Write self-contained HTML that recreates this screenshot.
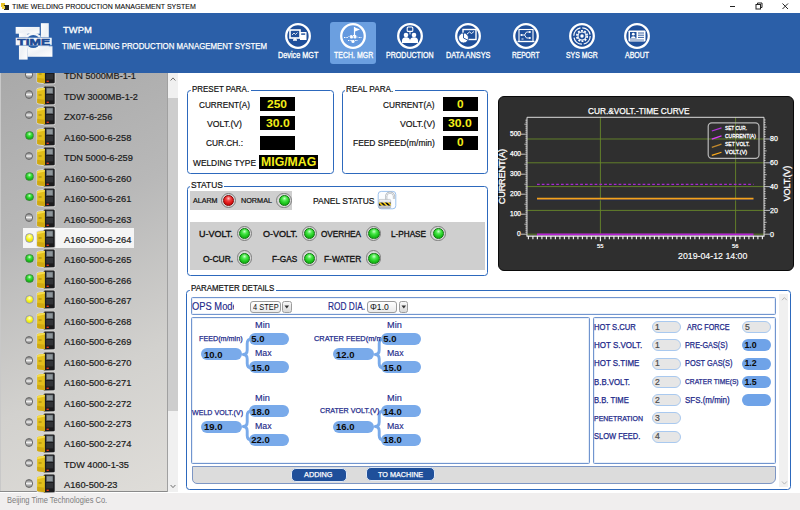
<!DOCTYPE html>
<html><head><meta charset="utf-8"><title>TIME WELDING PRODUCTION MANAGEMENT SYSTEM</title>
<style>
html,body{margin:0;padding:0;}
body{width:800px;height:510px;position:relative;overflow:hidden;background:#fff;font-family:"Liberation Sans",sans-serif;}
.t{position:absolute;white-space:nowrap;line-height:1;transform-origin:0 50%;}
.a{position:absolute;box-sizing:border-box;}
.bx{position:absolute;box-sizing:border-box;border:1.4px solid #2d69bd;border-radius:3.5px;}
.lg{position:absolute;background:#fff;height:10px;}
.blk{position:absolute;background:#000;}
.gr{position:absolute;background:#cfcfcf;}
.led{position:absolute;width:15.4px;height:15.4px;border-radius:50%;box-sizing:border-box;border:0.8px solid #7c7c7c;background:#d6d6d6;}
.led i{position:absolute;left:1.3px;top:1.3px;width:11.2px;height:11.2px;border-radius:50%;display:block;box-sizing:border-box;}
.led.g i{background:radial-gradient(circle at 50% 28%,#c8ffc8 0%,#4be84b 30%,#1fc81f 60%,#0e9a0e 100%);border:0.7px solid #0b7a0b;}
.led.r i{background:radial-gradient(circle at 50% 28%,#ffc0c0 0%,#f04040 30%,#e01818 60%,#a80000 100%);border:0.7px solid #8a0000;}
.pill{position:absolute;background:#79aaea;border-radius:6px;box-sizing:border-box;}
.inp{position:absolute;background:#e6e6e6;border:1px solid #a9c9ef;border-radius:6.5px;box-sizing:border-box;width:29px;height:12px;}
.dot{position:absolute;width:8.2px;height:8.2px;border-radius:50%;box-sizing:border-box;}
.dot.x{background:linear-gradient(#7c7c7c 0%,#c8c8c8 35%,#f6f6f6 52%,#b4b4b4 70%,#8a8a8a 100%);border:1px solid #686868;}
.dot.g{border:0.5px solid #3a8a3a;background:radial-gradient(circle at 50% 30%,#d8ffd8 0%,#48e448 28%,#1cc41c 60%,#0a900a 100%);}
.dot.y{border:0.6px solid #9c9cae;background:radial-gradient(circle at 50% 32%,#ffffd0 0%,#f6f622 45%,#e0e000 80%,#b8b800 100%);}
</style></head><body>
<div class="a" style="left:0.00px;top:0.00px;width:800.00px;height:13.00px;background:#fff;"></div>
<svg class="a" style="left:1px;top:2px" width="9" height="9" viewBox="0 0 9 9"><rect x="0" y="1" width="4" height="4" fill="#e8c020"/><rect x="3" y="3" width="5" height="5" fill="#222"/><rect x="1" y="4" width="3" height="3" fill="#f0d040"/></svg>
<svg class="a" style="left:720px;top:0" width="80" height="13" viewBox="0 0 80 13"><path d="M10 6.5h5" stroke="#222" stroke-width="1" fill="none"/><rect x="36" y="4.5" width="4.5" height="4.5" fill="none" stroke="#222" stroke-width="1"/><path d="M37.5 4.5v-1.5h4.5v4.5h-1.5" fill="none" stroke="#222" stroke-width="1"/><path d="M62.5 3.5l5.5 5.5M68 3.5l-5.5 5.5" stroke="#222" stroke-width="1" fill="none"/></svg>
<div class="a" style="left:0.00px;top:13.00px;width:800.00px;height:60.00px;background:#2b5fa8;"></div>
<svg class="a" style="left:10px;top:18px" width="50" height="48" viewBox="0 0 531 510">
<defs><linearGradient id="lgm" x1="0" y1="0" x2="1" y2="1"><stop offset="0" stop-color="#ffffff"/><stop offset="0.5" stop-color="#eef1f5"/><stop offset="1" stop-color="#ffffff"/></linearGradient></defs>
<g fill="url(#lgm)">
<rect x="60" y="95" width="255" height="72"/>
<rect x="95" y="160" width="92" height="282"/>
<rect x="328" y="55" width="84" height="250"/>
<rect x="185" y="300" width="266" height="112"/>
<circle cx="247" cy="250" r="96"/>
</g>
<circle cx="247" cy="250" r="70" fill="#2b5fa8"/>
<rect x="58" y="207" width="388" height="84" rx="10" fill="#f4f6fa" stroke="#2b5fa8" stroke-width="5"/>
<text x="252" y="283" font-family="Liberation Sans, sans-serif" font-weight="bold" font-size="94" text-anchor="middle" fill="#1d4a94" stroke="#1d4a94" stroke-width="5.5" textLength="348" lengthAdjust="spacingAndGlyphs">TIME</text>
</svg>
<div class="a" style="left:330.00px;top:21.50px;width:46.20px;height:42.70px;background:#6b9fe0;border-radius:3px;"></div>
<svg class="a" style="left:282.80px;top:21.4px" width="30" height="30" viewBox="-15 -15 30 30"><circle cx="0" cy="0" r="11.8" fill="#1f4f9a" stroke="#fff" stroke-width="2.3"/><rect x="-8" y="-6" width="10" height="8" fill="none" stroke="#fff" stroke-width="1.6"/><path d="M-5 4h4M-3 2v2" stroke="#fff" stroke-width="1.4"/><rect x="2" y="-4" width="6.5" height="8" fill="#fff"/><path d="M-6 -1l2-2 1.5 1.5 2-2" stroke="#fff" stroke-width="0.8" fill="none"/><rect x="3.2" y="-2.6" width="4" height="1.4" fill="#1f4f9a"/></svg>
<svg class="a" style="left:338.40px;top:21.4px" width="30" height="30" viewBox="-15 -15 30 30"><circle cx="0" cy="0" r="11.8" fill="#6499df" stroke="#fff" stroke-width="2.3"/><path d="M1.5 -9v9" stroke="#fff" stroke-width="1.2"/><path d="M2 -8.5l5 2-5 2z" fill="#fff"/><path d="M-9 1.5h4l2-2h6l2 2h4" stroke="#fff" stroke-width="1" fill="none" stroke-dasharray="1.4 1"/><path d="M-5 4.5h10" stroke="#fff" stroke-width="1" stroke-dasharray="1.4 1"/><circle cx="-1.5" cy="1" r="1.6" fill="#fff"/><circle cx="2" cy="1" r="1.6" fill="#fff"/><circle cx="0" cy="5.5" r="1.6" fill="#fff"/></svg>
<svg class="a" style="left:395.00px;top:21.4px" width="30" height="30" viewBox="-15 -15 30 30"><circle cx="0" cy="0" r="11.8" fill="#1f4f9a" stroke="#fff" stroke-width="2.3"/><rect x="-2.8" y="-9" width="5.6" height="4.4" rx="1" fill="none" stroke="#fff" stroke-width="1.1"/><circle cx="-4" cy="-1" r="2.3" fill="#fff"/><circle cx="4" cy="-1" r="2.3" fill="#fff"/><path d="M-8 7v-2.2a4 3.6 0 0 1 8 0V7zM0 7v-2.2a4 3.6 0 0 1 8 0V7z" fill="#fff"/><path d="M0 -4.6v3" stroke="#fff" stroke-width="1"/></svg>
<svg class="a" style="left:452.90px;top:21.4px" width="30" height="30" viewBox="-15 -15 30 30"><circle cx="0" cy="0" r="11.8" fill="#1f4f9a" stroke="#fff" stroke-width="2.3"/><rect x="-5" y="-6.5" width="13" height="10" fill="none" stroke="#fff" stroke-width="1.4"/><path d="M-1 -2l2.5-2 2 1.5 2.5-2" stroke="#fff" stroke-width="0.9" fill="none"/><circle cx="-4.5" cy="2" r="5" fill="#fff" stroke="#1f4f9a" stroke-width="0.8"/><path d="M-4.5 2v-5M-4.5 2l4.4 2.2" stroke="#1f4f9a" stroke-width="0.9"/></svg>
<svg class="a" style="left:510.60px;top:21.4px" width="30" height="30" viewBox="-15 -15 30 30"><circle cx="0" cy="0" r="11.8" fill="#1f4f9a" stroke="#fff" stroke-width="2.3"/><rect x="-7" y="-6.5" width="14" height="12" fill="none" stroke="#fff" stroke-width="1.1"/><path d="M-4.5 -1h3l2-3h3M-1.5 -1l2 3h3M-4.5 3h2" stroke="#fff" stroke-width="0.9" fill="none"/><circle cx="-4.5" cy="-1" r="1.1" fill="#fff"/><circle cx="3.8" cy="-4" r="1.1" fill="#fff"/><circle cx="3.8" cy="2" r="1.1" fill="#fff"/><path d="M-8.5 5.5h17" stroke="#fff" stroke-width="1.3"/></svg>
<svg class="a" style="left:567.10px;top:21.4px" width="30" height="30" viewBox="-15 -15 30 30"><circle cx="0" cy="0" r="11.8" fill="#1f4f9a" stroke="#fff" stroke-width="2.3"/><circle cx="0" cy="0" r="8.2" fill="none" stroke="#fff" stroke-width="1.2" stroke-dasharray="11 1.9"/><circle cx="0" cy="0" r="5.2" fill="none" stroke="#fff" stroke-width="1.7" stroke-dasharray="1.9 1.37"/><circle cx="0" cy="0" r="4" fill="none" stroke="#fff" stroke-width="1.1"/><circle cx="0" cy="0" r="1.7" fill="#fff"/></svg>
<svg class="a" style="left:622.30px;top:21.4px" width="30" height="30" viewBox="-15 -15 30 30"><circle cx="0" cy="0" r="11.8" fill="#1f4f9a" stroke="#fff" stroke-width="2.3"/><rect x="-8.5" y="-5.5" width="17" height="11" rx="0.8" fill="#fff"/><rect x="-7" y="-4" width="6.5" height="6.5" fill="#1f4f9a"/><circle cx="-3.7" cy="-1.8" r="1.4" fill="#fff"/><path d="M-6 2.2a2.3 2 0 0 1 4.6 0z" fill="#fff"/><path d="M1 -3h6M1 -0.8h6M1 1.4h6" stroke="#1f4f9a" stroke-width="0.9"/><path d="M-7 4h14" stroke="#1f4f9a" stroke-width="0.7"/></svg>
<div class="a" style="left:0.00px;top:73.00px;width:168.00px;height:419.00px;background:linear-gradient(155deg,#a9a9a9 0%,#b8b8b8 35%,#d2d1ce 70%,#dfddd9 100%);"></div>
<div class="a" style="left:0.00px;top:73.00px;width:1.00px;height:418.00px;background:#c8c8c8;"></div>
<div class="a" style="left:0.00px;top:491.20px;width:168.00px;height:1.00px;background:#8a8a8a;"></div>
<div class="a" style="left:168.00px;top:73.00px;width:10.00px;height:419.00px;background:#f0f0f0;"></div>
<div class="a" style="left:167.20px;top:73.00px;width:0.80px;height:419.00px;background:#a0a0a0;"></div>
<div class="a" style="left:168.00px;top:98.20px;width:10.00px;height:312.80px;background:#cdcdcd;"></div>
<svg class="a" style="left:167.8px;top:73px" width="10" height="418" viewBox="0 0 10 418"><path d="M2.6 7.5l2.4-2.6 2.4 2.6" stroke="#606060" stroke-width="0.9" fill="none"/><path d="M2.6 412l2.4 2.6 2.4-2.6" stroke="#606060" stroke-width="0.9" fill="none"/></svg>
<div class="a" style="left:0;top:73px;width:167px;height:20px;overflow:hidden">
<svg class="a" style="left:35.6px;top:-7.60px" width="20" height="20" viewBox="0 0 20 20">
<path d="M1 3.6Q1 2.6 2.2 2.4L10 1.2L10.4 0.9Q10.6 0.2 11.6 0.2H17.4Q18.9 0.2 18.9 1.8V17.4Q18.9 18.4 17.8 18.5L9.6 18.9L2 17.6Q1.1 17.4 1.1 16.4z" fill="#d6d6d6" stroke="#d6d6d6" stroke-width="1.3" stroke-linejoin="round"/>
<path d="M7.8 1.5Q7.9 0.4 9.2 0.4H17.3Q18.7 0.4 18.7 1.8V17.2Q18.7 18.2 17.6 18.3L7.8 18.5z" fill="#1b1b1d"/>
<path d="M1.1 4Q1.1 2.9 2.3 2.7L8.9 1.7V18.3L2.1 17.3Q1.2 17.1 1.2 16.2z" fill="#e2be1a"/>
<path d="M1.1 4Q1.1 2.9 2.3 2.7L8.9 1.7V3.5L1.1 5.2z" fill="#f5dc4c"/>
<path d="M1.2 12.8L8.9 13.7V18.3L2.1 17.3Q1.2 17.1 1.2 16.2z" fill="#cfa812"/>
<path d="M2.6 8.6h3v0.8h-3z" fill="#8a700a"/>
<path d="M10.2 1.7h7v6.2h-7z" fill="#5f666b"/>
<path d="M10.9 2.4h5.6v4.6h-5.6z" fill="#8e969b"/>
<path d="M10.2 9h7v5.4h-7z" fill="#303236"/>
<rect x="10.6" y="15.6" width="2.2" height="1.4" fill="#e23a1c"/>
</svg>
<div class="dot x" style="left:24.90px;top:-3.00px;width:8.6px;height:8.6px"></div>
<span class="t" style="left:64.4px;top:-1.65px;font-size:9.9px;color:#1a1a1a;transform:scaleX(0.93);-webkit-text-stroke:0.2px #1a1a1a">TDN 5000MB-1-1</span>
</div>
<svg class="a" style="left:35.6px;top:85.85px" width="20" height="20" viewBox="0 0 20 20">
<path d="M1 3.6Q1 2.6 2.2 2.4L10 1.2L10.4 0.9Q10.6 0.2 11.6 0.2H17.4Q18.9 0.2 18.9 1.8V17.4Q18.9 18.4 17.8 18.5L9.6 18.9L2 17.6Q1.1 17.4 1.1 16.4z" fill="#d6d6d6" stroke="#d6d6d6" stroke-width="1.3" stroke-linejoin="round"/>
<path d="M7.8 1.5Q7.9 0.4 9.2 0.4H17.3Q18.7 0.4 18.7 1.8V17.2Q18.7 18.2 17.6 18.3L7.8 18.5z" fill="#1b1b1d"/>
<path d="M1.1 4Q1.1 2.9 2.3 2.7L8.9 1.7V18.3L2.1 17.3Q1.2 17.1 1.2 16.2z" fill="#e2be1a"/>
<path d="M1.1 4Q1.1 2.9 2.3 2.7L8.9 1.7V3.5L1.1 5.2z" fill="#f5dc4c"/>
<path d="M1.2 12.8L8.9 13.7V18.3L2.1 17.3Q1.2 17.1 1.2 16.2z" fill="#cfa812"/>
<path d="M2.6 8.6h3v0.8h-3z" fill="#8a700a"/>
<path d="M10.2 1.7h7v6.2h-7z" fill="#5f666b"/>
<path d="M10.9 2.4h5.6v4.6h-5.6z" fill="#8e969b"/>
<path d="M10.2 9h7v5.4h-7z" fill="#303236"/>
<rect x="10.6" y="15.6" width="2.2" height="1.4" fill="#e23a1c"/>
</svg>
<div class="dot x" style="left:24.90px;top:90.45px;width:8.6px;height:8.6px"></div>
<svg class="a" style="left:35.6px;top:106.30px" width="20" height="20" viewBox="0 0 20 20">
<path d="M1 3.6Q1 2.6 2.2 2.4L10 1.2L10.4 0.9Q10.6 0.2 11.6 0.2H17.4Q18.9 0.2 18.9 1.8V17.4Q18.9 18.4 17.8 18.5L9.6 18.9L2 17.6Q1.1 17.4 1.1 16.4z" fill="#d6d6d6" stroke="#d6d6d6" stroke-width="1.3" stroke-linejoin="round"/>
<path d="M7.8 1.5Q7.9 0.4 9.2 0.4H17.3Q18.7 0.4 18.7 1.8V17.2Q18.7 18.2 17.6 18.3L7.8 18.5z" fill="#1b1b1d"/>
<path d="M1.1 4Q1.1 2.9 2.3 2.7L8.9 1.7V18.3L2.1 17.3Q1.2 17.1 1.2 16.2z" fill="#e2be1a"/>
<path d="M1.1 4Q1.1 2.9 2.3 2.7L8.9 1.7V3.5L1.1 5.2z" fill="#f5dc4c"/>
<path d="M1.2 12.8L8.9 13.7V18.3L2.1 17.3Q1.2 17.1 1.2 16.2z" fill="#cfa812"/>
<path d="M2.6 8.6h3v0.8h-3z" fill="#8a700a"/>
<path d="M10.2 1.7h7v6.2h-7z" fill="#5f666b"/>
<path d="M10.9 2.4h5.6v4.6h-5.6z" fill="#8e969b"/>
<path d="M10.2 9h7v5.4h-7z" fill="#303236"/>
<rect x="10.6" y="15.6" width="2.2" height="1.4" fill="#e23a1c"/>
</svg>
<div class="dot x" style="left:24.90px;top:110.90px;width:8.6px;height:8.6px"></div>
<svg class="a" style="left:35.6px;top:126.75px" width="20" height="20" viewBox="0 0 20 20">
<path d="M1 3.6Q1 2.6 2.2 2.4L10 1.2L10.4 0.9Q10.6 0.2 11.6 0.2H17.4Q18.9 0.2 18.9 1.8V17.4Q18.9 18.4 17.8 18.5L9.6 18.9L2 17.6Q1.1 17.4 1.1 16.4z" fill="#d6d6d6" stroke="#d6d6d6" stroke-width="1.3" stroke-linejoin="round"/>
<path d="M7.8 1.5Q7.9 0.4 9.2 0.4H17.3Q18.7 0.4 18.7 1.8V17.2Q18.7 18.2 17.6 18.3L7.8 18.5z" fill="#1b1b1d"/>
<path d="M1.1 4Q1.1 2.9 2.3 2.7L8.9 1.7V18.3L2.1 17.3Q1.2 17.1 1.2 16.2z" fill="#e2be1a"/>
<path d="M1.1 4Q1.1 2.9 2.3 2.7L8.9 1.7V3.5L1.1 5.2z" fill="#f5dc4c"/>
<path d="M1.2 12.8L8.9 13.7V18.3L2.1 17.3Q1.2 17.1 1.2 16.2z" fill="#cfa812"/>
<path d="M2.6 8.6h3v0.8h-3z" fill="#8a700a"/>
<path d="M10.2 1.7h7v6.2h-7z" fill="#5f666b"/>
<path d="M10.9 2.4h5.6v4.6h-5.6z" fill="#8e969b"/>
<path d="M10.2 9h7v5.4h-7z" fill="#303236"/>
<rect x="10.6" y="15.6" width="2.2" height="1.4" fill="#e23a1c"/>
</svg>
<div class="dot g" style="left:24.80px;top:131.25px;width:8.8px;height:8.8px"></div>
<svg class="a" style="left:35.6px;top:147.20px" width="20" height="20" viewBox="0 0 20 20">
<path d="M1 3.6Q1 2.6 2.2 2.4L10 1.2L10.4 0.9Q10.6 0.2 11.6 0.2H17.4Q18.9 0.2 18.9 1.8V17.4Q18.9 18.4 17.8 18.5L9.6 18.9L2 17.6Q1.1 17.4 1.1 16.4z" fill="#d6d6d6" stroke="#d6d6d6" stroke-width="1.3" stroke-linejoin="round"/>
<path d="M7.8 1.5Q7.9 0.4 9.2 0.4H17.3Q18.7 0.4 18.7 1.8V17.2Q18.7 18.2 17.6 18.3L7.8 18.5z" fill="#1b1b1d"/>
<path d="M1.1 4Q1.1 2.9 2.3 2.7L8.9 1.7V18.3L2.1 17.3Q1.2 17.1 1.2 16.2z" fill="#e2be1a"/>
<path d="M1.1 4Q1.1 2.9 2.3 2.7L8.9 1.7V3.5L1.1 5.2z" fill="#f5dc4c"/>
<path d="M1.2 12.8L8.9 13.7V18.3L2.1 17.3Q1.2 17.1 1.2 16.2z" fill="#cfa812"/>
<path d="M2.6 8.6h3v0.8h-3z" fill="#8a700a"/>
<path d="M10.2 1.7h7v6.2h-7z" fill="#5f666b"/>
<path d="M10.9 2.4h5.6v4.6h-5.6z" fill="#8e969b"/>
<path d="M10.2 9h7v5.4h-7z" fill="#303236"/>
<rect x="10.6" y="15.6" width="2.2" height="1.4" fill="#e23a1c"/>
</svg>
<div class="dot x" style="left:24.90px;top:151.80px;width:8.6px;height:8.6px"></div>
<svg class="a" style="left:35.6px;top:167.65px" width="20" height="20" viewBox="0 0 20 20">
<path d="M1 3.6Q1 2.6 2.2 2.4L10 1.2L10.4 0.9Q10.6 0.2 11.6 0.2H17.4Q18.9 0.2 18.9 1.8V17.4Q18.9 18.4 17.8 18.5L9.6 18.9L2 17.6Q1.1 17.4 1.1 16.4z" fill="#d6d6d6" stroke="#d6d6d6" stroke-width="1.3" stroke-linejoin="round"/>
<path d="M7.8 1.5Q7.9 0.4 9.2 0.4H17.3Q18.7 0.4 18.7 1.8V17.2Q18.7 18.2 17.6 18.3L7.8 18.5z" fill="#1b1b1d"/>
<path d="M1.1 4Q1.1 2.9 2.3 2.7L8.9 1.7V18.3L2.1 17.3Q1.2 17.1 1.2 16.2z" fill="#e2be1a"/>
<path d="M1.1 4Q1.1 2.9 2.3 2.7L8.9 1.7V3.5L1.1 5.2z" fill="#f5dc4c"/>
<path d="M1.2 12.8L8.9 13.7V18.3L2.1 17.3Q1.2 17.1 1.2 16.2z" fill="#cfa812"/>
<path d="M2.6 8.6h3v0.8h-3z" fill="#8a700a"/>
<path d="M10.2 1.7h7v6.2h-7z" fill="#5f666b"/>
<path d="M10.9 2.4h5.6v4.6h-5.6z" fill="#8e969b"/>
<path d="M10.2 9h7v5.4h-7z" fill="#303236"/>
<rect x="10.6" y="15.6" width="2.2" height="1.4" fill="#e23a1c"/>
</svg>
<div class="dot g" style="left:24.80px;top:172.15px;width:8.8px;height:8.8px"></div>
<svg class="a" style="left:35.6px;top:188.10px" width="20" height="20" viewBox="0 0 20 20">
<path d="M1 3.6Q1 2.6 2.2 2.4L10 1.2L10.4 0.9Q10.6 0.2 11.6 0.2H17.4Q18.9 0.2 18.9 1.8V17.4Q18.9 18.4 17.8 18.5L9.6 18.9L2 17.6Q1.1 17.4 1.1 16.4z" fill="#d6d6d6" stroke="#d6d6d6" stroke-width="1.3" stroke-linejoin="round"/>
<path d="M7.8 1.5Q7.9 0.4 9.2 0.4H17.3Q18.7 0.4 18.7 1.8V17.2Q18.7 18.2 17.6 18.3L7.8 18.5z" fill="#1b1b1d"/>
<path d="M1.1 4Q1.1 2.9 2.3 2.7L8.9 1.7V18.3L2.1 17.3Q1.2 17.1 1.2 16.2z" fill="#e2be1a"/>
<path d="M1.1 4Q1.1 2.9 2.3 2.7L8.9 1.7V3.5L1.1 5.2z" fill="#f5dc4c"/>
<path d="M1.2 12.8L8.9 13.7V18.3L2.1 17.3Q1.2 17.1 1.2 16.2z" fill="#cfa812"/>
<path d="M2.6 8.6h3v0.8h-3z" fill="#8a700a"/>
<path d="M10.2 1.7h7v6.2h-7z" fill="#5f666b"/>
<path d="M10.9 2.4h5.6v4.6h-5.6z" fill="#8e969b"/>
<path d="M10.2 9h7v5.4h-7z" fill="#303236"/>
<rect x="10.6" y="15.6" width="2.2" height="1.4" fill="#e23a1c"/>
</svg>
<div class="dot g" style="left:24.80px;top:192.60px;width:8.8px;height:8.8px"></div>
<svg class="a" style="left:35.6px;top:208.55px" width="20" height="20" viewBox="0 0 20 20">
<path d="M1 3.6Q1 2.6 2.2 2.4L10 1.2L10.4 0.9Q10.6 0.2 11.6 0.2H17.4Q18.9 0.2 18.9 1.8V17.4Q18.9 18.4 17.8 18.5L9.6 18.9L2 17.6Q1.1 17.4 1.1 16.4z" fill="#d6d6d6" stroke="#d6d6d6" stroke-width="1.3" stroke-linejoin="round"/>
<path d="M7.8 1.5Q7.9 0.4 9.2 0.4H17.3Q18.7 0.4 18.7 1.8V17.2Q18.7 18.2 17.6 18.3L7.8 18.5z" fill="#1b1b1d"/>
<path d="M1.1 4Q1.1 2.9 2.3 2.7L8.9 1.7V18.3L2.1 17.3Q1.2 17.1 1.2 16.2z" fill="#e2be1a"/>
<path d="M1.1 4Q1.1 2.9 2.3 2.7L8.9 1.7V3.5L1.1 5.2z" fill="#f5dc4c"/>
<path d="M1.2 12.8L8.9 13.7V18.3L2.1 17.3Q1.2 17.1 1.2 16.2z" fill="#cfa812"/>
<path d="M2.6 8.6h3v0.8h-3z" fill="#8a700a"/>
<path d="M10.2 1.7h7v6.2h-7z" fill="#5f666b"/>
<path d="M10.9 2.4h5.6v4.6h-5.6z" fill="#8e969b"/>
<path d="M10.2 9h7v5.4h-7z" fill="#303236"/>
<rect x="10.6" y="15.6" width="2.2" height="1.4" fill="#e23a1c"/>
</svg>
<div class="dot x" style="left:24.90px;top:213.15px;width:8.6px;height:8.6px"></div>
<div class="a" style="left:22.80px;top:228.00px;width:111.20px;height:20.40px;background:#f5f5f5;"></div>
<svg class="a" style="left:35.6px;top:229.00px" width="20" height="20" viewBox="0 0 20 20">
<path d="M1 3.6Q1 2.6 2.2 2.4L10 1.2L10.4 0.9Q10.6 0.2 11.6 0.2H17.4Q18.9 0.2 18.9 1.8V17.4Q18.9 18.4 17.8 18.5L9.6 18.9L2 17.6Q1.1 17.4 1.1 16.4z" fill="#d6d6d6" stroke="#d6d6d6" stroke-width="1.3" stroke-linejoin="round"/>
<path d="M7.8 1.5Q7.9 0.4 9.2 0.4H17.3Q18.7 0.4 18.7 1.8V17.2Q18.7 18.2 17.6 18.3L7.8 18.5z" fill="#1b1b1d"/>
<path d="M1.1 4Q1.1 2.9 2.3 2.7L8.9 1.7V18.3L2.1 17.3Q1.2 17.1 1.2 16.2z" fill="#e2be1a"/>
<path d="M1.1 4Q1.1 2.9 2.3 2.7L8.9 1.7V3.5L1.1 5.2z" fill="#f5dc4c"/>
<path d="M1.2 12.8L8.9 13.7V18.3L2.1 17.3Q1.2 17.1 1.2 16.2z" fill="#cfa812"/>
<path d="M2.6 8.6h3v0.8h-3z" fill="#8a700a"/>
<path d="M10.2 1.7h7v6.2h-7z" fill="#5f666b"/>
<path d="M10.9 2.4h5.6v4.6h-5.6z" fill="#8e969b"/>
<path d="M10.2 9h7v5.4h-7z" fill="#303236"/>
<rect x="10.6" y="15.6" width="2.2" height="1.4" fill="#e23a1c"/>
</svg>
<div class="dot y" style="left:24.50px;top:233.20px;width:9.4px;height:9.4px"></div>
<svg class="a" style="left:35.6px;top:249.45px" width="20" height="20" viewBox="0 0 20 20">
<path d="M1 3.6Q1 2.6 2.2 2.4L10 1.2L10.4 0.9Q10.6 0.2 11.6 0.2H17.4Q18.9 0.2 18.9 1.8V17.4Q18.9 18.4 17.8 18.5L9.6 18.9L2 17.6Q1.1 17.4 1.1 16.4z" fill="#d6d6d6" stroke="#d6d6d6" stroke-width="1.3" stroke-linejoin="round"/>
<path d="M7.8 1.5Q7.9 0.4 9.2 0.4H17.3Q18.7 0.4 18.7 1.8V17.2Q18.7 18.2 17.6 18.3L7.8 18.5z" fill="#1b1b1d"/>
<path d="M1.1 4Q1.1 2.9 2.3 2.7L8.9 1.7V18.3L2.1 17.3Q1.2 17.1 1.2 16.2z" fill="#e2be1a"/>
<path d="M1.1 4Q1.1 2.9 2.3 2.7L8.9 1.7V3.5L1.1 5.2z" fill="#f5dc4c"/>
<path d="M1.2 12.8L8.9 13.7V18.3L2.1 17.3Q1.2 17.1 1.2 16.2z" fill="#cfa812"/>
<path d="M2.6 8.6h3v0.8h-3z" fill="#8a700a"/>
<path d="M10.2 1.7h7v6.2h-7z" fill="#5f666b"/>
<path d="M10.9 2.4h5.6v4.6h-5.6z" fill="#8e969b"/>
<path d="M10.2 9h7v5.4h-7z" fill="#303236"/>
<rect x="10.6" y="15.6" width="2.2" height="1.4" fill="#e23a1c"/>
</svg>
<div class="dot g" style="left:24.80px;top:253.95px;width:8.8px;height:8.8px"></div>
<svg class="a" style="left:35.6px;top:269.90px" width="20" height="20" viewBox="0 0 20 20">
<path d="M1 3.6Q1 2.6 2.2 2.4L10 1.2L10.4 0.9Q10.6 0.2 11.6 0.2H17.4Q18.9 0.2 18.9 1.8V17.4Q18.9 18.4 17.8 18.5L9.6 18.9L2 17.6Q1.1 17.4 1.1 16.4z" fill="#d6d6d6" stroke="#d6d6d6" stroke-width="1.3" stroke-linejoin="round"/>
<path d="M7.8 1.5Q7.9 0.4 9.2 0.4H17.3Q18.7 0.4 18.7 1.8V17.2Q18.7 18.2 17.6 18.3L7.8 18.5z" fill="#1b1b1d"/>
<path d="M1.1 4Q1.1 2.9 2.3 2.7L8.9 1.7V18.3L2.1 17.3Q1.2 17.1 1.2 16.2z" fill="#e2be1a"/>
<path d="M1.1 4Q1.1 2.9 2.3 2.7L8.9 1.7V3.5L1.1 5.2z" fill="#f5dc4c"/>
<path d="M1.2 12.8L8.9 13.7V18.3L2.1 17.3Q1.2 17.1 1.2 16.2z" fill="#cfa812"/>
<path d="M2.6 8.6h3v0.8h-3z" fill="#8a700a"/>
<path d="M10.2 1.7h7v6.2h-7z" fill="#5f666b"/>
<path d="M10.9 2.4h5.6v4.6h-5.6z" fill="#8e969b"/>
<path d="M10.2 9h7v5.4h-7z" fill="#303236"/>
<rect x="10.6" y="15.6" width="2.2" height="1.4" fill="#e23a1c"/>
</svg>
<div class="dot g" style="left:24.80px;top:274.40px;width:8.8px;height:8.8px"></div>
<svg class="a" style="left:35.6px;top:290.35px" width="20" height="20" viewBox="0 0 20 20">
<path d="M1 3.6Q1 2.6 2.2 2.4L10 1.2L10.4 0.9Q10.6 0.2 11.6 0.2H17.4Q18.9 0.2 18.9 1.8V17.4Q18.9 18.4 17.8 18.5L9.6 18.9L2 17.6Q1.1 17.4 1.1 16.4z" fill="#d6d6d6" stroke="#d6d6d6" stroke-width="1.3" stroke-linejoin="round"/>
<path d="M7.8 1.5Q7.9 0.4 9.2 0.4H17.3Q18.7 0.4 18.7 1.8V17.2Q18.7 18.2 17.6 18.3L7.8 18.5z" fill="#1b1b1d"/>
<path d="M1.1 4Q1.1 2.9 2.3 2.7L8.9 1.7V18.3L2.1 17.3Q1.2 17.1 1.2 16.2z" fill="#e2be1a"/>
<path d="M1.1 4Q1.1 2.9 2.3 2.7L8.9 1.7V3.5L1.1 5.2z" fill="#f5dc4c"/>
<path d="M1.2 12.8L8.9 13.7V18.3L2.1 17.3Q1.2 17.1 1.2 16.2z" fill="#cfa812"/>
<path d="M2.6 8.6h3v0.8h-3z" fill="#8a700a"/>
<path d="M10.2 1.7h7v6.2h-7z" fill="#5f666b"/>
<path d="M10.9 2.4h5.6v4.6h-5.6z" fill="#8e969b"/>
<path d="M10.2 9h7v5.4h-7z" fill="#303236"/>
<rect x="10.6" y="15.6" width="2.2" height="1.4" fill="#e23a1c"/>
</svg>
<div class="dot y" style="left:24.50px;top:294.55px;width:9.4px;height:9.4px"></div>
<svg class="a" style="left:35.6px;top:310.80px" width="20" height="20" viewBox="0 0 20 20">
<path d="M1 3.6Q1 2.6 2.2 2.4L10 1.2L10.4 0.9Q10.6 0.2 11.6 0.2H17.4Q18.9 0.2 18.9 1.8V17.4Q18.9 18.4 17.8 18.5L9.6 18.9L2 17.6Q1.1 17.4 1.1 16.4z" fill="#d6d6d6" stroke="#d6d6d6" stroke-width="1.3" stroke-linejoin="round"/>
<path d="M7.8 1.5Q7.9 0.4 9.2 0.4H17.3Q18.7 0.4 18.7 1.8V17.2Q18.7 18.2 17.6 18.3L7.8 18.5z" fill="#1b1b1d"/>
<path d="M1.1 4Q1.1 2.9 2.3 2.7L8.9 1.7V18.3L2.1 17.3Q1.2 17.1 1.2 16.2z" fill="#e2be1a"/>
<path d="M1.1 4Q1.1 2.9 2.3 2.7L8.9 1.7V3.5L1.1 5.2z" fill="#f5dc4c"/>
<path d="M1.2 12.8L8.9 13.7V18.3L2.1 17.3Q1.2 17.1 1.2 16.2z" fill="#cfa812"/>
<path d="M2.6 8.6h3v0.8h-3z" fill="#8a700a"/>
<path d="M10.2 1.7h7v6.2h-7z" fill="#5f666b"/>
<path d="M10.9 2.4h5.6v4.6h-5.6z" fill="#8e969b"/>
<path d="M10.2 9h7v5.4h-7z" fill="#303236"/>
<rect x="10.6" y="15.6" width="2.2" height="1.4" fill="#e23a1c"/>
</svg>
<div class="dot y" style="left:24.50px;top:315.00px;width:9.4px;height:9.4px"></div>
<svg class="a" style="left:35.6px;top:331.25px" width="20" height="20" viewBox="0 0 20 20">
<path d="M1 3.6Q1 2.6 2.2 2.4L10 1.2L10.4 0.9Q10.6 0.2 11.6 0.2H17.4Q18.9 0.2 18.9 1.8V17.4Q18.9 18.4 17.8 18.5L9.6 18.9L2 17.6Q1.1 17.4 1.1 16.4z" fill="#d6d6d6" stroke="#d6d6d6" stroke-width="1.3" stroke-linejoin="round"/>
<path d="M7.8 1.5Q7.9 0.4 9.2 0.4H17.3Q18.7 0.4 18.7 1.8V17.2Q18.7 18.2 17.6 18.3L7.8 18.5z" fill="#1b1b1d"/>
<path d="M1.1 4Q1.1 2.9 2.3 2.7L8.9 1.7V18.3L2.1 17.3Q1.2 17.1 1.2 16.2z" fill="#e2be1a"/>
<path d="M1.1 4Q1.1 2.9 2.3 2.7L8.9 1.7V3.5L1.1 5.2z" fill="#f5dc4c"/>
<path d="M1.2 12.8L8.9 13.7V18.3L2.1 17.3Q1.2 17.1 1.2 16.2z" fill="#cfa812"/>
<path d="M2.6 8.6h3v0.8h-3z" fill="#8a700a"/>
<path d="M10.2 1.7h7v6.2h-7z" fill="#5f666b"/>
<path d="M10.9 2.4h5.6v4.6h-5.6z" fill="#8e969b"/>
<path d="M10.2 9h7v5.4h-7z" fill="#303236"/>
<rect x="10.6" y="15.6" width="2.2" height="1.4" fill="#e23a1c"/>
</svg>
<div class="dot x" style="left:24.90px;top:335.85px;width:8.6px;height:8.6px"></div>
<svg class="a" style="left:35.6px;top:351.70px" width="20" height="20" viewBox="0 0 20 20">
<path d="M1 3.6Q1 2.6 2.2 2.4L10 1.2L10.4 0.9Q10.6 0.2 11.6 0.2H17.4Q18.9 0.2 18.9 1.8V17.4Q18.9 18.4 17.8 18.5L9.6 18.9L2 17.6Q1.1 17.4 1.1 16.4z" fill="#d6d6d6" stroke="#d6d6d6" stroke-width="1.3" stroke-linejoin="round"/>
<path d="M7.8 1.5Q7.9 0.4 9.2 0.4H17.3Q18.7 0.4 18.7 1.8V17.2Q18.7 18.2 17.6 18.3L7.8 18.5z" fill="#1b1b1d"/>
<path d="M1.1 4Q1.1 2.9 2.3 2.7L8.9 1.7V18.3L2.1 17.3Q1.2 17.1 1.2 16.2z" fill="#e2be1a"/>
<path d="M1.1 4Q1.1 2.9 2.3 2.7L8.9 1.7V3.5L1.1 5.2z" fill="#f5dc4c"/>
<path d="M1.2 12.8L8.9 13.7V18.3L2.1 17.3Q1.2 17.1 1.2 16.2z" fill="#cfa812"/>
<path d="M2.6 8.6h3v0.8h-3z" fill="#8a700a"/>
<path d="M10.2 1.7h7v6.2h-7z" fill="#5f666b"/>
<path d="M10.9 2.4h5.6v4.6h-5.6z" fill="#8e969b"/>
<path d="M10.2 9h7v5.4h-7z" fill="#303236"/>
<rect x="10.6" y="15.6" width="2.2" height="1.4" fill="#e23a1c"/>
</svg>
<div class="dot x" style="left:24.90px;top:356.30px;width:8.6px;height:8.6px"></div>
<svg class="a" style="left:35.6px;top:372.15px" width="20" height="20" viewBox="0 0 20 20">
<path d="M1 3.6Q1 2.6 2.2 2.4L10 1.2L10.4 0.9Q10.6 0.2 11.6 0.2H17.4Q18.9 0.2 18.9 1.8V17.4Q18.9 18.4 17.8 18.5L9.6 18.9L2 17.6Q1.1 17.4 1.1 16.4z" fill="#d6d6d6" stroke="#d6d6d6" stroke-width="1.3" stroke-linejoin="round"/>
<path d="M7.8 1.5Q7.9 0.4 9.2 0.4H17.3Q18.7 0.4 18.7 1.8V17.2Q18.7 18.2 17.6 18.3L7.8 18.5z" fill="#1b1b1d"/>
<path d="M1.1 4Q1.1 2.9 2.3 2.7L8.9 1.7V18.3L2.1 17.3Q1.2 17.1 1.2 16.2z" fill="#e2be1a"/>
<path d="M1.1 4Q1.1 2.9 2.3 2.7L8.9 1.7V3.5L1.1 5.2z" fill="#f5dc4c"/>
<path d="M1.2 12.8L8.9 13.7V18.3L2.1 17.3Q1.2 17.1 1.2 16.2z" fill="#cfa812"/>
<path d="M2.6 8.6h3v0.8h-3z" fill="#8a700a"/>
<path d="M10.2 1.7h7v6.2h-7z" fill="#5f666b"/>
<path d="M10.9 2.4h5.6v4.6h-5.6z" fill="#8e969b"/>
<path d="M10.2 9h7v5.4h-7z" fill="#303236"/>
<rect x="10.6" y="15.6" width="2.2" height="1.4" fill="#e23a1c"/>
</svg>
<div class="dot x" style="left:24.90px;top:376.75px;width:8.6px;height:8.6px"></div>
<svg class="a" style="left:35.6px;top:392.60px" width="20" height="20" viewBox="0 0 20 20">
<path d="M1 3.6Q1 2.6 2.2 2.4L10 1.2L10.4 0.9Q10.6 0.2 11.6 0.2H17.4Q18.9 0.2 18.9 1.8V17.4Q18.9 18.4 17.8 18.5L9.6 18.9L2 17.6Q1.1 17.4 1.1 16.4z" fill="#d6d6d6" stroke="#d6d6d6" stroke-width="1.3" stroke-linejoin="round"/>
<path d="M7.8 1.5Q7.9 0.4 9.2 0.4H17.3Q18.7 0.4 18.7 1.8V17.2Q18.7 18.2 17.6 18.3L7.8 18.5z" fill="#1b1b1d"/>
<path d="M1.1 4Q1.1 2.9 2.3 2.7L8.9 1.7V18.3L2.1 17.3Q1.2 17.1 1.2 16.2z" fill="#e2be1a"/>
<path d="M1.1 4Q1.1 2.9 2.3 2.7L8.9 1.7V3.5L1.1 5.2z" fill="#f5dc4c"/>
<path d="M1.2 12.8L8.9 13.7V18.3L2.1 17.3Q1.2 17.1 1.2 16.2z" fill="#cfa812"/>
<path d="M2.6 8.6h3v0.8h-3z" fill="#8a700a"/>
<path d="M10.2 1.7h7v6.2h-7z" fill="#5f666b"/>
<path d="M10.9 2.4h5.6v4.6h-5.6z" fill="#8e969b"/>
<path d="M10.2 9h7v5.4h-7z" fill="#303236"/>
<rect x="10.6" y="15.6" width="2.2" height="1.4" fill="#e23a1c"/>
</svg>
<div class="dot x" style="left:24.90px;top:397.20px;width:8.6px;height:8.6px"></div>
<svg class="a" style="left:35.6px;top:413.05px" width="20" height="20" viewBox="0 0 20 20">
<path d="M1 3.6Q1 2.6 2.2 2.4L10 1.2L10.4 0.9Q10.6 0.2 11.6 0.2H17.4Q18.9 0.2 18.9 1.8V17.4Q18.9 18.4 17.8 18.5L9.6 18.9L2 17.6Q1.1 17.4 1.1 16.4z" fill="#d6d6d6" stroke="#d6d6d6" stroke-width="1.3" stroke-linejoin="round"/>
<path d="M7.8 1.5Q7.9 0.4 9.2 0.4H17.3Q18.7 0.4 18.7 1.8V17.2Q18.7 18.2 17.6 18.3L7.8 18.5z" fill="#1b1b1d"/>
<path d="M1.1 4Q1.1 2.9 2.3 2.7L8.9 1.7V18.3L2.1 17.3Q1.2 17.1 1.2 16.2z" fill="#e2be1a"/>
<path d="M1.1 4Q1.1 2.9 2.3 2.7L8.9 1.7V3.5L1.1 5.2z" fill="#f5dc4c"/>
<path d="M1.2 12.8L8.9 13.7V18.3L2.1 17.3Q1.2 17.1 1.2 16.2z" fill="#cfa812"/>
<path d="M2.6 8.6h3v0.8h-3z" fill="#8a700a"/>
<path d="M10.2 1.7h7v6.2h-7z" fill="#5f666b"/>
<path d="M10.9 2.4h5.6v4.6h-5.6z" fill="#8e969b"/>
<path d="M10.2 9h7v5.4h-7z" fill="#303236"/>
<rect x="10.6" y="15.6" width="2.2" height="1.4" fill="#e23a1c"/>
</svg>
<div class="dot x" style="left:24.90px;top:417.65px;width:8.6px;height:8.6px"></div>
<svg class="a" style="left:35.6px;top:433.50px" width="20" height="20" viewBox="0 0 20 20">
<path d="M1 3.6Q1 2.6 2.2 2.4L10 1.2L10.4 0.9Q10.6 0.2 11.6 0.2H17.4Q18.9 0.2 18.9 1.8V17.4Q18.9 18.4 17.8 18.5L9.6 18.9L2 17.6Q1.1 17.4 1.1 16.4z" fill="#d6d6d6" stroke="#d6d6d6" stroke-width="1.3" stroke-linejoin="round"/>
<path d="M7.8 1.5Q7.9 0.4 9.2 0.4H17.3Q18.7 0.4 18.7 1.8V17.2Q18.7 18.2 17.6 18.3L7.8 18.5z" fill="#1b1b1d"/>
<path d="M1.1 4Q1.1 2.9 2.3 2.7L8.9 1.7V18.3L2.1 17.3Q1.2 17.1 1.2 16.2z" fill="#e2be1a"/>
<path d="M1.1 4Q1.1 2.9 2.3 2.7L8.9 1.7V3.5L1.1 5.2z" fill="#f5dc4c"/>
<path d="M1.2 12.8L8.9 13.7V18.3L2.1 17.3Q1.2 17.1 1.2 16.2z" fill="#cfa812"/>
<path d="M2.6 8.6h3v0.8h-3z" fill="#8a700a"/>
<path d="M10.2 1.7h7v6.2h-7z" fill="#5f666b"/>
<path d="M10.9 2.4h5.6v4.6h-5.6z" fill="#8e969b"/>
<path d="M10.2 9h7v5.4h-7z" fill="#303236"/>
<rect x="10.6" y="15.6" width="2.2" height="1.4" fill="#e23a1c"/>
</svg>
<div class="dot x" style="left:24.90px;top:438.10px;width:8.6px;height:8.6px"></div>
<svg class="a" style="left:35.6px;top:453.95px" width="20" height="20" viewBox="0 0 20 20">
<path d="M1 3.6Q1 2.6 2.2 2.4L10 1.2L10.4 0.9Q10.6 0.2 11.6 0.2H17.4Q18.9 0.2 18.9 1.8V17.4Q18.9 18.4 17.8 18.5L9.6 18.9L2 17.6Q1.1 17.4 1.1 16.4z" fill="#d6d6d6" stroke="#d6d6d6" stroke-width="1.3" stroke-linejoin="round"/>
<path d="M7.8 1.5Q7.9 0.4 9.2 0.4H17.3Q18.7 0.4 18.7 1.8V17.2Q18.7 18.2 17.6 18.3L7.8 18.5z" fill="#1b1b1d"/>
<path d="M1.1 4Q1.1 2.9 2.3 2.7L8.9 1.7V18.3L2.1 17.3Q1.2 17.1 1.2 16.2z" fill="#e2be1a"/>
<path d="M1.1 4Q1.1 2.9 2.3 2.7L8.9 1.7V3.5L1.1 5.2z" fill="#f5dc4c"/>
<path d="M1.2 12.8L8.9 13.7V18.3L2.1 17.3Q1.2 17.1 1.2 16.2z" fill="#cfa812"/>
<path d="M2.6 8.6h3v0.8h-3z" fill="#8a700a"/>
<path d="M10.2 1.7h7v6.2h-7z" fill="#5f666b"/>
<path d="M10.9 2.4h5.6v4.6h-5.6z" fill="#8e969b"/>
<path d="M10.2 9h7v5.4h-7z" fill="#303236"/>
<rect x="10.6" y="15.6" width="2.2" height="1.4" fill="#e23a1c"/>
</svg>
<div class="dot x" style="left:24.90px;top:458.55px;width:8.6px;height:8.6px"></div>
<svg class="a" style="left:35.6px;top:474.40px" width="20" height="20" viewBox="0 0 20 20">
<path d="M1 3.6Q1 2.6 2.2 2.4L10 1.2L10.4 0.9Q10.6 0.2 11.6 0.2H17.4Q18.9 0.2 18.9 1.8V17.4Q18.9 18.4 17.8 18.5L9.6 18.9L2 17.6Q1.1 17.4 1.1 16.4z" fill="#d6d6d6" stroke="#d6d6d6" stroke-width="1.3" stroke-linejoin="round"/>
<path d="M7.8 1.5Q7.9 0.4 9.2 0.4H17.3Q18.7 0.4 18.7 1.8V17.2Q18.7 18.2 17.6 18.3L7.8 18.5z" fill="#1b1b1d"/>
<path d="M1.1 4Q1.1 2.9 2.3 2.7L8.9 1.7V18.3L2.1 17.3Q1.2 17.1 1.2 16.2z" fill="#e2be1a"/>
<path d="M1.1 4Q1.1 2.9 2.3 2.7L8.9 1.7V3.5L1.1 5.2z" fill="#f5dc4c"/>
<path d="M1.2 12.8L8.9 13.7V18.3L2.1 17.3Q1.2 17.1 1.2 16.2z" fill="#cfa812"/>
<path d="M2.6 8.6h3v0.8h-3z" fill="#8a700a"/>
<path d="M10.2 1.7h7v6.2h-7z" fill="#5f666b"/>
<path d="M10.9 2.4h5.6v4.6h-5.6z" fill="#8e969b"/>
<path d="M10.2 9h7v5.4h-7z" fill="#303236"/>
<rect x="10.6" y="15.6" width="2.2" height="1.4" fill="#e23a1c"/>
</svg>
<div class="dot x" style="left:24.90px;top:479.00px;width:8.6px;height:8.6px"></div>
<div class="a" style="left:0.00px;top:492.50px;width:800.00px;height:17.50px;background:#f0eeee;"></div>
<div class="bx" style="left:187.20px;top:89.80px;width:147.00px;height:84.10px;"></div>
<div class="a" style="left:190.50px;top:84.00px;width:60.00px;height:10.00px;background:#fff;"></div>
<div class="blk" style="left:260.00px;top:97.00px;width:35.00px;height:14.00px;"></div>
<div class="blk" style="left:260.00px;top:116.40px;width:35.00px;height:14.00px;"></div>
<div class="blk" style="left:260.00px;top:136.00px;width:35.00px;height:13.80px;"></div>
<div class="blk" style="left:259.00px;top:155.00px;width:59.00px;height:14.00px;"></div>
<div class="bx" style="left:341.60px;top:90.00px;width:146.80px;height:83.80px;"></div>
<div class="a" style="left:345.00px;top:84.00px;width:49.50px;height:10.00px;background:#fff;"></div>
<div class="blk" style="left:442.60px;top:97.40px;width:35.10px;height:13.80px;"></div>
<div class="blk" style="left:442.60px;top:116.50px;width:35.10px;height:14.00px;"></div>
<div class="blk" style="left:442.60px;top:135.80px;width:35.10px;height:14.00px;"></div>
<div class="bx" style="left:187.20px;top:186.20px;width:300.70px;height:89.60px;"></div>
<div class="a" style="left:190.30px;top:180.00px;width:34.20px;height:10.00px;background:#fff;"></div>
<div class="gr" style="left:190.30px;top:190.90px;width:102.00px;height:19.00px;"></div>
<div class="gr" style="left:190.30px;top:221.60px;width:295.20px;height:48.40px;"></div>
<div class="led r" style="left:221.00px;top:192.70px"><i></i></div>
<div class="led g" style="left:276.30px;top:192.70px"><i></i></div>
<svg class="a" style="left:377px;top:190px" width="20" height="20" viewBox="0 0 20 20">
<defs><linearGradient id="lkb" x1="0" y1="0" x2="0" y2="1"><stop offset="0" stop-color="#f2f3f5"/><stop offset="1" stop-color="#b9bdc3"/></linearGradient>
<pattern id="stp" width="3.2" height="3.2" patternUnits="userSpaceOnUse" patternTransform="rotate(-45)"><rect width="1.6" height="3.2" fill="#111"/><rect x="1.6" width="1.6" height="3.2" fill="#f2c80e"/></pattern></defs>
<rect x="1.2" y="1.4" width="17.6" height="17.4" rx="3" fill="#fbfdff" stroke="#9cc2ee" stroke-width="1"/>
<path d="M9.2 10V6.4a3.9 3.7 0 0 1 7.8 0V9" fill="none" stroke="#aeb3b9" stroke-width="2.2"/>
<path d="M9.2 10V6.4a3.9 3.7 0 0 1 7.8 0V9" fill="none" stroke="#eef0f2" stroke-width="0.9"/>
<rect x="1.9" y="9.4" width="11.8" height="8.8" rx="1" fill="url(#lkb)" stroke="#a2a7ad" stroke-width="0.5"/>
<rect x="1.9" y="12.5" width="11.8" height="3.1" fill="url(#stp)"/>
</svg>
<div class="led g" style="left:237.00px;top:226.00px"><i></i></div>
<div class="led g" style="left:301.90px;top:226.00px"><i></i></div>
<div class="led g" style="left:366.10px;top:226.00px"><i></i></div>
<div class="led g" style="left:430.30px;top:226.00px"><i></i></div>
<div class="led g" style="left:237.00px;top:250.30px"><i></i></div>
<div class="led g" style="left:301.90px;top:250.30px"><i></i></div>
<div class="led g" style="left:366.10px;top:250.30px"><i></i></div>
<div class="a" style="left:497.60px;top:96.00px;width:296.20px;height:175.20px;background:#2f2f2f;border:1.6px solid #0a0a0a;border-radius:6px;"></div>
<svg class="a" style="left:498px;top:96px" width="296" height="175" viewBox="498 96 296 175" font-family="Liberation Sans, sans-serif"><path d="M527 139H764" stroke="#688829" stroke-width="0.9"/><path d="M527 162.8H764" stroke="#688829" stroke-width="0.9"/><path d="M527 186.6H764" stroke="#688829" stroke-width="0.9"/><path d="M527 210.4H764" stroke="#688829" stroke-width="0.9"/><path d="M527 234.2H764" stroke="#688829" stroke-width="0.9"/><path d="M600.4 117.3V236" stroke="#688829" stroke-width="0.9"/><path d="M735.6 117.3V236" stroke="#688829" stroke-width="0.9"/><path d="M537 184.4H753.5" stroke="#a828d0" stroke-width="1.2" stroke-dasharray="2.7 2.1"/><path d="M537 199.8H753.5" stroke="#1a2a66" stroke-width="1"/><path d="M537 198.6H753.5" stroke="#f5a21c" stroke-width="1.6"/><path d="M537 234.4H753.5" stroke="#b41ed6" stroke-width="2"/><path d="M527 117.3H764M527 117.3V236M764 117.3V236" stroke="#dcdcdc" stroke-width="1" fill="none"/><path d="M526.5 236.1H764.5" stroke="#f2f2f2" stroke-width="1.4" fill="none"/><path d="M521 234.20H527M525.4 232.20H527M525.4 230.20H527M525.4 228.20H527M525.4 226.20H527M524.4 224.20H527M525.4 222.20H527M525.4 220.20H527M525.4 218.20H527M525.4 216.20H527M521 214.20H527M525.4 212.20H527M525.4 210.20H527M525.4 208.20H527M525.4 206.20H527M524.4 204.20H527M525.4 202.20H527M525.4 200.20H527M525.4 198.20H527M525.4 196.20H527M521 194.20H527M525.4 192.20H527M525.4 190.20H527M525.4 188.20H527M525.4 186.20H527M524.4 184.20H527M525.4 182.20H527M525.4 180.20H527M525.4 178.20H527M525.4 176.20H527M521 174.20H527M525.4 172.20H527M525.4 170.20H527M525.4 168.20H527M525.4 166.20H527M524.4 164.20H527M525.4 162.20H527M525.4 160.20H527M525.4 158.20H527M525.4 156.20H527M521 154.20H527M525.4 152.20H527M525.4 150.20H527M525.4 148.20H527M525.4 146.20H527M524.4 144.20H527M525.4 142.20H527M525.4 140.20H527M525.4 138.20H527M525.4 136.20H527M521 134.20H527M525.4 132.20H527M525.4 130.20H527M525.4 128.20H527M525.4 126.20H527M524.4 124.20H527M525.4 122.20H527M525.4 120.20H527" stroke="#e4e4e4" stroke-width="0.8"/><path d="M764 234.20H770M764 231.82H765.6M764 229.44H765.6M764 227.06H765.6M764 224.68H765.6M764 222.30H766.6M764 219.92H765.6M764 217.54H765.6M764 215.16H765.6M764 212.78H765.6M764 210.40H770M764 208.02H765.6M764 205.64H765.6M764 203.26H765.6M764 200.88H765.6M764 198.50H766.6M764 196.12H765.6M764 193.74H765.6M764 191.36H765.6M764 188.98H765.6M764 186.60H770M764 184.22H765.6M764 181.84H765.6M764 179.46H765.6M764 177.08H765.6M764 174.70H766.6M764 172.32H765.6M764 169.94H765.6M764 167.56H765.6M764 165.18H765.6M764 162.80H770M764 160.42H765.6M764 158.04H765.6M764 155.66H765.6M764 153.28H765.6M764 150.90H766.6M764 148.52H765.6M764 146.14H765.6M764 143.76H765.6M764 141.38H765.6M764 139.00H770M764 136.62H765.6M764 134.24H765.6M764 131.86H765.6M764 129.48H765.6M764 127.10H766.6M764 124.72H765.6M764 122.34H765.6M764 119.96H765.6" stroke="#e4e4e4" stroke-width="0.8"/><path d="M528.40 236V239.2M532.90 236V239.2M537.40 236V239.2M541.90 236V239.2M546.40 236V239.2M550.90 236V239.2M555.40 236V239.2M559.90 236V239.2M564.40 236V239.2M568.90 236V239.2M573.40 236V239.2M577.90 236V239.2M582.40 236V239.2M586.90 236V239.2M591.40 236V239.2M595.90 236V239.2M600.40 236V239.2M604.90 236V239.2M609.40 236V239.2M613.90 236V239.2M618.40 236V239.2M622.90 236V239.2M627.40 236V239.2M631.90 236V239.2M636.40 236V239.2M640.90 236V239.2M645.40 236V239.2M649.90 236V239.2M654.40 236V239.2M658.90 236V239.2M663.40 236V239.2M667.90 236V239.2M672.40 236V239.2M676.90 236V239.2M681.40 236V239.2M685.90 236V239.2M690.40 236V239.2M694.90 236V239.2M699.40 236V239.2M703.90 236V239.2M708.40 236V239.2M712.90 236V239.2M717.40 236V239.2M721.90 236V239.2M726.40 236V239.2M730.90 236V239.2M735.40 236V239.2M739.90 236V239.2M744.40 236V239.2M748.90 236V239.2M753.40 236V239.2M757.90 236V239.2M762.40 236V239.2M600.4 236V241.2M735.6 236V241.2" stroke="#f0f0f0" stroke-width="1.15"/><rect x="708.2" y="122.8" width="50.8" height="35.6" rx="3.6" fill="none" stroke="#b8b8b8" stroke-width="1.2"/><path d="M711.8 131.0L721.5 127.8" stroke="#b434dc" stroke-width="1.3"/><path d="M711.8 139.15L721.5 135.95" stroke="#dc3cfa" stroke-width="1.3"/><path d="M711.8 147.3L721.5 144.1" stroke="#c48a2c" stroke-width="1.3"/><path d="M711.8 155.45000000000002L721.5 152.25" stroke="#fcaa1c" stroke-width="1.3"/></svg>
<div class="t" style="left:503.4px;top:176.6px;width:0;height:0"><span class="t" style="left:-30px;top:-4.6px;width:60px;text-align:center;font-size:9.2px;color:#fff;transform-origin:50% 50%;transform:rotate(-90deg);-webkit-text-stroke:0.3px #fff;letter-spacing:-0.2px">CURRENT(A)</span></div>
<div class="t" style="left:788.2px;top:184px;width:0;height:0"><span class="t" style="left:-30px;top:-4.6px;width:60px;text-align:center;font-size:9.2px;color:#fff;transform-origin:50% 50%;transform:rotate(-90deg);-webkit-text-stroke:0.3px #fff;letter-spacing:-0.2px">VOLT.(V)</span></div>
<div class="bx" style="left:186.20px;top:289.90px;width:605.20px;height:200.00px;"></div>
<div class="a" style="left:190.00px;top:284.00px;width:86.00px;height:10.00px;background:#fff;"></div>
<div class="a" style="left:191.20px;top:297.20px;width:584.60px;height:18.20px;border:1.2px solid #7195cf;border-radius:1.5px;background:#fff;box-shadow:inset 0 0 0 0.6px #d5e1f3;"></div>
<div class="a" style="left:191.20px;top:316.80px;width:398.60px;height:147.50px;border:1.2px solid #7195cf;border-radius:1.5px;background:#fff;box-shadow:inset 0 0 0 0.6px #d5e1f3;"></div>
<div class="a" style="left:593.20px;top:316.80px;width:182.60px;height:147.50px;border:1.2px solid #7195cf;border-radius:1.5px;background:#fff;box-shadow:inset 0 0 0 0.6px #d5e1f3;"></div>
<div class="a" style="left:779.20px;top:294.00px;width:9.20px;height:193.00px;background:#f0f0f0;"></div>
<svg class="a" style="left:778.7px;top:296px" width="11" height="191" viewBox="0 0 11 191"><path d="M3 4.2l2.4-2.6 2.4 2.6" stroke="#b0b0b0" stroke-width="0.9" fill="none"/><path d="M3 185.5l2.4 2.6 2.4-2.6" stroke="#b0b0b0" stroke-width="0.9" fill="none"/></svg>
<div class="a" style="left:192.2px;top:300px;width:41.4px;height:14px;overflow:hidden"><span class="t" style="left:-0.2px;top:1.5px;font-size:10.4px;color:#22298a;transform:scaleX(0.9);-webkit-text-stroke:0.15px #22298a">OPS Mode</span></div>
<div class="a" style="left:250.40px;top:301.00px;width:30.80px;height:11.60px;border:1px solid #9c9c9c;border-radius:3px;background:linear-gradient(#ffffff,#ebebeb);"></div>
<div class="a" style="left:282.40px;top:301.00px;width:9.60px;height:11.60px;border:1px solid #9c9c9c;border-radius:2.5px;background:linear-gradient(#f8f8f8,#d8d8d8);"></div>
<svg class="a" style="left:282.4px;top:301px" width="9.6" height="11.6" viewBox="0 0 9.6 11.6"><path d="M2.5 4.6h4.6l-2.3 2.8z" fill="#303030"/></svg>
<div class="a" style="left:366.60px;top:301.00px;width:30.80px;height:11.60px;border:1px solid #9c9c9c;border-radius:3px;background:linear-gradient(#ffffff,#ebebeb);"></div>
<div class="a" style="left:398.60px;top:301.00px;width:9.80px;height:11.60px;border:1px solid #9c9c9c;border-radius:2.5px;background:linear-gradient(#f8f8f8,#d8d8d8);"></div>
<svg class="a" style="left:398.7px;top:301px" width="9.6" height="11.6" viewBox="0 0 9.6 11.6"><path d="M2.5 4.6h4.6l-2.3 2.8z" fill="#303030"/></svg>
<svg class="a" style="left:240.50px;top:332.70px" width="14" height="41" viewBox="0 0 14 41"><path d="M10.5 5.9Q6.2 5.9 6.2 10.5V17Q6.2 21.3 2.2 21.5Q6.2 21.7 6.2 26V30.6Q6.2 35 10.5 35" fill="none" stroke="#79aaea" stroke-width="2.9" stroke-linecap="round" stroke-linejoin="round"/></svg>
<div class="pill" style="left:248.90px;top:332.70px;width:40.60px;height:12.00px;"></div>
<div class="pill" style="left:248.90px;top:361.20px;width:40.60px;height:12.30px;border-radius:6.2px;"></div>
<div class="pill" style="left:201.00px;top:348.30px;width:41.20px;height:12.10px;border-radius:6.3px;"></div>
<svg class="a" style="left:372.50px;top:332.70px" width="14" height="41" viewBox="0 0 14 41"><path d="M10.5 5.9Q6.2 5.9 6.2 10.5V17Q6.2 21.3 2.2 21.5Q6.2 21.7 6.2 26V30.6Q6.2 35 10.5 35" fill="none" stroke="#79aaea" stroke-width="2.9" stroke-linecap="round" stroke-linejoin="round"/></svg>
<div class="pill" style="left:380.90px;top:332.70px;width:40.60px;height:12.00px;"></div>
<div class="pill" style="left:380.90px;top:361.20px;width:40.60px;height:12.30px;border-radius:6.2px;"></div>
<div class="pill" style="left:333.00px;top:348.30px;width:41.20px;height:12.10px;border-radius:6.3px;"></div>
<div class="a" style="left:313.70px;top:332.70px;width:67.50px;height:12px;overflow:hidden"><span class="t" style="left:0;top:2.1px;font-size:7.8px;color:#22298a;transform:scaleX(0.95);-webkit-text-stroke:0.25px #22298a">CRATER FEED(m/min)</span></div>
<svg class="a" style="left:240.50px;top:405.20px" width="14" height="41" viewBox="0 0 14 41"><path d="M10.5 5.9Q6.2 5.9 6.2 10.5V17Q6.2 21.3 2.2 21.5Q6.2 21.7 6.2 26V30.6Q6.2 35 10.5 35" fill="none" stroke="#79aaea" stroke-width="2.9" stroke-linecap="round" stroke-linejoin="round"/></svg>
<div class="pill" style="left:248.90px;top:405.20px;width:40.60px;height:12.00px;"></div>
<div class="pill" style="left:248.90px;top:433.70px;width:40.60px;height:12.30px;border-radius:6.2px;"></div>
<div class="pill" style="left:201.00px;top:420.80px;width:41.20px;height:12.10px;border-radius:6.3px;"></div>
<svg class="a" style="left:372.50px;top:405.20px" width="14" height="41" viewBox="0 0 14 41"><path d="M10.5 5.9Q6.2 5.9 6.2 10.5V17Q6.2 21.3 2.2 21.5Q6.2 21.7 6.2 26V30.6Q6.2 35 10.5 35" fill="none" stroke="#79aaea" stroke-width="2.9" stroke-linecap="round" stroke-linejoin="round"/></svg>
<div class="pill" style="left:380.90px;top:405.20px;width:40.60px;height:12.00px;"></div>
<div class="pill" style="left:380.90px;top:433.70px;width:40.60px;height:12.30px;border-radius:6.2px;"></div>
<div class="pill" style="left:333.00px;top:420.80px;width:41.20px;height:12.10px;border-radius:6.3px;"></div>
<div class="a" style="left:191.60px;top:465.80px;width:584.20px;height:18.20px;background:#dcdcdc;border:1px solid #7d96c4;border-radius:0 0 6px 5px;"></div>
<div class="a" style="left:291.20px;top:468.00px;width:56.00px;height:14.00px;background:#1f4f9a;border-radius:5px;border:1px solid #dfe9f7;"></div>
<div class="a" style="left:366.00px;top:467.20px;width:69.20px;height:14.00px;background:#1f4f9a;border-radius:5px;border:1px solid #dfe9f7;"></div>
<div class="inp" style="left:651.80px;top:321.00px;width:29.00px;height:12.00px;"></div>
<div class="inp" style="left:651.80px;top:339.25px;width:29.00px;height:12.00px;"></div>
<div class="inp" style="left:651.80px;top:357.50px;width:29.00px;height:12.00px;"></div>
<div class="inp" style="left:651.80px;top:375.75px;width:29.00px;height:12.00px;"></div>
<div class="inp" style="left:651.80px;top:394.00px;width:29.00px;height:12.00px;"></div>
<div class="inp" style="left:651.80px;top:412.25px;width:29.00px;height:12.00px;"></div>
<div class="inp" style="left:651.80px;top:430.50px;width:29.00px;height:12.00px;"></div>
<div class="inp" style="left:741.80px;top:321.00px;width:29.60px;height:12.00px;"></div>
<div class="pill" style="left:741.80px;top:339.25px;width:29.60px;height:12.00px;border-radius:6px;background:#6fa3e8;"></div>
<div class="pill" style="left:741.80px;top:357.50px;width:29.60px;height:12.00px;border-radius:6px;background:#6fa3e8;"></div>
<div class="pill" style="left:741.80px;top:375.75px;width:29.60px;height:12.00px;border-radius:6px;background:#6fa3e8;"></div>
<div class="pill" style="left:741.80px;top:394.00px;width:29.60px;height:12.00px;border-radius:6px;background:#6fa3e8;"></div>
<span class="t" style="left:12.00px;top:2.78px;font-size:7.6px;color:#0a0a0a;transform:scaleX(0.9256);-webkit-text-stroke:0.1px #0a0a0a;">TIME WELDING PRODUCTION MANAGEMENT SYSTEM</span>
<span class="t" style="left:63.20px;top:24.50px;font-size:9.8px;color:#fff;transform:scaleX(0.9653);-webkit-text-stroke:0.3px #fff;">TWPM</span>
<span class="t" style="left:62.00px;top:40.99px;font-size:9.4px;color:#fff;transform:scaleX(0.8362);-webkit-text-stroke:0.25px #fff;">TIME WELDING PRODUCTION MANAGEMENT SYSTEM</span>
<span class="t" style="left:277.50px;top:51.43px;font-size:8.3px;color:#fff;transform:scaleX(0.8783);-webkit-text-stroke:0.3px #fff;">Device MGT</span>
<span class="t" style="left:333.80px;top:51.43px;font-size:8.3px;color:#fff;transform:scaleX(0.8419);-webkit-text-stroke:0.3px #fff;">TECH. MGR</span>
<span class="t" style="left:386.30px;top:51.43px;font-size:8.3px;color:#fff;transform:scaleX(0.8515);-webkit-text-stroke:0.3px #fff;">PRODUCTION</span>
<span class="t" style="left:445.60px;top:51.43px;font-size:8.3px;color:#fff;transform:scaleX(0.8806);-webkit-text-stroke:0.3px #fff;">DATA ANSYS</span>
<span class="t" style="left:511.90px;top:51.43px;font-size:8.3px;color:#fff;transform:scaleX(0.7985);-webkit-text-stroke:0.3px #fff;">REPORT</span>
<span class="t" style="left:566.00px;top:51.43px;font-size:8.3px;color:#fff;transform:scaleX(0.8310);-webkit-text-stroke:0.3px #fff;">SYS MGR</span>
<span class="t" style="left:625.30px;top:51.43px;font-size:8.3px;color:#fff;transform:scaleX(0.8428);-webkit-text-stroke:0.3px #fff;">ABOUT</span>
<span class="t" style="left:64.10px;top:91.80px;font-size:9.9px;color:#1a1a1a;transform:scaleX(0.9286);-webkit-text-stroke:0.2px #1a1a1a;">TDW 3000MB-1-2</span>
<span class="t" style="left:64.10px;top:112.25px;font-size:9.9px;color:#1a1a1a;transform:scaleX(0.9261);-webkit-text-stroke:0.2px #1a1a1a;">ZX07-6-256</span>
<span class="t" style="left:64.10px;top:132.70px;font-size:9.9px;color:#1a1a1a;transform:scaleX(0.9443);-webkit-text-stroke:0.2px #1a1a1a;">A160-500-6-258</span>
<span class="t" style="left:64.10px;top:153.15px;font-size:9.9px;color:#1a1a1a;transform:scaleX(0.9366);-webkit-text-stroke:0.2px #1a1a1a;">TDN 5000-6-259</span>
<span class="t" style="left:64.10px;top:173.60px;font-size:9.9px;color:#1a1a1a;transform:scaleX(0.9443);-webkit-text-stroke:0.2px #1a1a1a;">A160-500-6-260</span>
<span class="t" style="left:64.10px;top:194.05px;font-size:9.9px;color:#1a1a1a;transform:scaleX(0.9443);-webkit-text-stroke:0.2px #1a1a1a;">A160-500-6-261</span>
<span class="t" style="left:64.10px;top:214.50px;font-size:9.9px;color:#1a1a1a;transform:scaleX(0.9443);-webkit-text-stroke:0.2px #1a1a1a;">A160-500-6-263</span>
<span class="t" style="left:64.10px;top:234.95px;font-size:9.9px;color:#1a1a1a;transform:scaleX(0.9443);-webkit-text-stroke:0.2px #1a1a1a;">A160-500-6-264</span>
<span class="t" style="left:64.10px;top:255.40px;font-size:9.9px;color:#1a1a1a;transform:scaleX(0.9443);-webkit-text-stroke:0.2px #1a1a1a;">A160-500-6-265</span>
<span class="t" style="left:64.10px;top:275.85px;font-size:9.9px;color:#1a1a1a;transform:scaleX(0.9443);-webkit-text-stroke:0.2px #1a1a1a;">A160-500-6-266</span>
<span class="t" style="left:64.10px;top:296.30px;font-size:9.9px;color:#1a1a1a;transform:scaleX(0.9443);-webkit-text-stroke:0.2px #1a1a1a;">A160-500-6-267</span>
<span class="t" style="left:64.10px;top:316.75px;font-size:9.9px;color:#1a1a1a;transform:scaleX(0.9443);-webkit-text-stroke:0.2px #1a1a1a;">A160-500-6-268</span>
<span class="t" style="left:64.10px;top:337.20px;font-size:9.9px;color:#1a1a1a;transform:scaleX(0.9443);-webkit-text-stroke:0.2px #1a1a1a;">A160-500-6-269</span>
<span class="t" style="left:64.10px;top:357.65px;font-size:9.9px;color:#1a1a1a;transform:scaleX(0.9443);-webkit-text-stroke:0.2px #1a1a1a;">A160-500-6-270</span>
<span class="t" style="left:64.10px;top:378.10px;font-size:9.9px;color:#1a1a1a;transform:scaleX(0.9443);-webkit-text-stroke:0.2px #1a1a1a;">A160-500-6-271</span>
<span class="t" style="left:64.10px;top:398.55px;font-size:9.9px;color:#1a1a1a;transform:scaleX(0.9443);-webkit-text-stroke:0.2px #1a1a1a;">A160-500-2-272</span>
<span class="t" style="left:64.10px;top:419.00px;font-size:9.9px;color:#1a1a1a;transform:scaleX(0.9443);-webkit-text-stroke:0.2px #1a1a1a;">A160-500-2-273</span>
<span class="t" style="left:64.10px;top:439.45px;font-size:9.9px;color:#1a1a1a;transform:scaleX(0.9443);-webkit-text-stroke:0.2px #1a1a1a;">A160-500-2-274</span>
<span class="t" style="left:64.10px;top:459.90px;font-size:9.9px;color:#1a1a1a;transform:scaleX(0.9238);-webkit-text-stroke:0.2px #1a1a1a;">TDW 4000-1-35</span>
<span class="t" style="left:64.10px;top:480.35px;font-size:9.9px;color:#1a1a1a;transform:scaleX(0.9368);-webkit-text-stroke:0.2px #1a1a1a;">A160-500-23</span>
<span class="t" style="left:6.80px;top:497.28px;font-size:8.2px;color:#7c7c7c;transform:scaleX(0.9148);">Beijing Time Technologies Co.</span>
<span class="t" style="left:191.50px;top:84.69px;font-size:9px;color:#111;transform:scaleX(0.8827);-webkit-text-stroke:0.2px #111;">PRESET PARA.</span>
<span class="t" style="left:199.00px;top:99.59px;font-size:9.4px;color:#111;transform:scaleX(0.8741);-webkit-text-stroke:0.2px #111;">CURRENT(A)</span>
<span class="t" style="left:207.00px;top:118.99px;font-size:9.4px;color:#111;transform:scaleX(0.9245);-webkit-text-stroke:0.2px #111;">VOLT.(V)</span>
<span class="t" style="left:206.00px;top:138.39px;font-size:9.4px;color:#111;transform:scaleX(0.8879);-webkit-text-stroke:0.2px #111;">CUR.CH.:</span>
<span class="t" style="left:193.00px;top:157.59px;font-size:9.4px;color:#111;transform:scaleX(0.8912);-webkit-text-stroke:0.2px #111;">WELDING TYPE</span>
<span class="t" style="left:267.40px;top:98.56px;font-size:11.5px;color:#f4ee19;font-weight:bold;transform:scaleX(1.0423);">250</span>
<span class="t" style="left:265.60px;top:117.96px;font-size:11.5px;color:#f4ee19;font-weight:bold;transform:scaleX(1.0629);">30.0</span>
<span class="t" style="left:261.40px;top:156.32px;font-size:12px;color:#f4ee19;font-weight:bold;transform:scaleX(1.0222);">MIG/MAG</span>
<span class="t" style="left:346.00px;top:84.69px;font-size:9px;color:#111;transform:scaleX(0.9091);-webkit-text-stroke:0.2px #111;">REAL PARA.</span>
<span class="t" style="left:383.40px;top:99.79px;font-size:9.4px;color:#111;transform:scaleX(0.8810);-webkit-text-stroke:0.2px #111;">CURRENT(A)</span>
<span class="t" style="left:399.70px;top:118.99px;font-size:9.4px;color:#111;transform:scaleX(0.9271);-webkit-text-stroke:0.2px #111;">VOLT.(V)</span>
<span class="t" style="left:353.00px;top:138.19px;font-size:9.4px;color:#111;transform:scaleX(0.8974);-webkit-text-stroke:0.2px #111;">FEED SPEED(m/min)</span>
<span class="t" style="left:457.20px;top:98.77px;font-size:11.5px;color:#f4ee19;font-weight:bold;transform:scaleX(1.0302);">0</span>
<span class="t" style="left:448.40px;top:117.96px;font-size:11.5px;color:#f4ee19;font-weight:bold;transform:scaleX(1.0629);">30.0</span>
<span class="t" style="left:457.20px;top:137.17px;font-size:11.5px;color:#f4ee19;font-weight:bold;transform:scaleX(1.0302);">0</span>
<span class="t" style="left:191.20px;top:180.89px;font-size:9px;color:#111;transform:scaleX(0.9306);-webkit-text-stroke:0.2px #111;">STATUS</span>
<span class="t" style="left:192.50px;top:197.67px;font-size:6.8px;color:#111;transform:scaleX(1.0460);-webkit-text-stroke:0.2px #111;">ALARM</span>
<span class="t" style="left:241.00px;top:197.67px;font-size:6.8px;color:#111;transform:scaleX(1.0655);-webkit-text-stroke:0.2px #111;">NORMAL</span>
<span class="t" style="left:313.00px;top:195.99px;font-size:9.4px;color:#111;transform:scaleX(0.9057);-webkit-text-stroke:0.2px #111;">PANEL STATUS</span>
<span class="t" style="left:199.00px;top:229.39px;font-size:9.4px;color:#111;transform:scaleX(0.9589);-webkit-text-stroke:0.35px #111;">U-VOLT.</span>
<span class="t" style="left:263.00px;top:229.39px;font-size:9.4px;color:#111;transform:scaleX(0.9642);-webkit-text-stroke:0.35px #111;">O-VOLT.</span>
<span class="t" style="left:321.00px;top:229.39px;font-size:9.4px;color:#111;transform:scaleX(0.8722);-webkit-text-stroke:0.35px #111;">OVERHEA</span>
<span class="t" style="left:390.50px;top:229.39px;font-size:9.4px;color:#111;transform:scaleX(0.8723);-webkit-text-stroke:0.35px #111;">L-PHASE</span>
<span class="t" style="left:202.60px;top:253.89px;font-size:9.4px;color:#111;transform:scaleX(0.9057);-webkit-text-stroke:0.35px #111;">O-CUR.</span>
<span class="t" style="left:272.30px;top:253.89px;font-size:9.4px;color:#111;transform:scaleX(0.8794);-webkit-text-stroke:0.35px #111;">F-GAS</span>
<span class="t" style="left:323.80px;top:253.89px;font-size:9.4px;color:#111;transform:scaleX(0.8930);-webkit-text-stroke:0.35px #111;">F-WATER</span>
<span class="t" style="left:588.00px;top:106.59px;font-size:9px;color:#fff;transform:scaleX(0.9179);-webkit-text-stroke:0.25px #fff;">CUR.&amp;VOLT.-TIME CURVE</span>
<span class="t" style="left:509.80px;top:131.27px;font-size:6.8px;color:#fff;transform:scaleX(0.9697);-webkit-text-stroke:0.25px #fff;">500</span>
<span class="t" style="left:509.80px;top:151.47px;font-size:6.8px;color:#fff;transform:scaleX(0.9697);-webkit-text-stroke:0.25px #fff;">400</span>
<span class="t" style="left:509.80px;top:171.47px;font-size:6.8px;color:#fff;transform:scaleX(0.9697);-webkit-text-stroke:0.25px #fff;">300</span>
<span class="t" style="left:509.80px;top:191.27px;font-size:6.8px;color:#fff;transform:scaleX(0.9697);-webkit-text-stroke:0.25px #fff;">200</span>
<span class="t" style="left:509.80px;top:211.07px;font-size:6.8px;color:#fff;transform:scaleX(0.9697);-webkit-text-stroke:0.25px #fff;">100</span>
<span class="t" style="left:517.00px;top:230.97px;font-size:6.8px;color:#fff;transform:scaleX(0.9785);-webkit-text-stroke:0.25px #fff;">0</span>
<span class="t" style="left:770.00px;top:135.37px;font-size:7px;color:#fff;-webkit-text-stroke:0.25px #fff;">80</span>
<span class="t" style="left:770.00px;top:159.17px;font-size:7px;color:#fff;-webkit-text-stroke:0.25px #fff;">60</span>
<span class="t" style="left:770.00px;top:182.97px;font-size:7px;color:#fff;-webkit-text-stroke:0.25px #fff;">40</span>
<span class="t" style="left:770.00px;top:206.77px;font-size:7px;color:#fff;-webkit-text-stroke:0.25px #fff;">20</span>
<span class="t" style="left:770.00px;top:230.77px;font-size:7px;color:#fff;transform:scaleX(1.0240);-webkit-text-stroke:0.25px #fff;">0</span>
<span class="t" style="left:597.00px;top:242.66px;font-size:6.2px;color:#fff;transform:scaleX(0.9288);-webkit-text-stroke:0.2px #fff;">55</span>
<span class="t" style="left:732.20px;top:242.66px;font-size:6.2px;color:#fff;transform:scaleX(0.9288);-webkit-text-stroke:0.2px #fff;">56</span>
<span class="t" style="left:678.20px;top:251.30px;font-size:9.6px;color:#fff;transform:scaleX(0.9162);-webkit-text-stroke:0.15px #fff;">2019-04-12 14:00</span>
<span class="t" style="left:724.80px;top:125.76px;font-size:5.8px;color:#fff;transform:scaleX(0.8162);-webkit-text-stroke:0.3px #fff;">SET CUR.</span>
<span class="t" style="left:724.80px;top:133.91px;font-size:5.8px;color:#fff;transform:scaleX(0.8537);-webkit-text-stroke:0.3px #fff;">CURRENT(A)</span>
<span class="t" style="left:724.80px;top:142.06px;font-size:5.8px;color:#fff;transform:scaleX(0.8676);-webkit-text-stroke:0.3px #fff;">SET VOLT.</span>
<span class="t" style="left:724.80px;top:150.21px;font-size:5.8px;color:#fff;transform:scaleX(0.9485);-webkit-text-stroke:0.3px #fff;">VOLT.(V)</span>
<span class="t" style="left:190.50px;top:284.49px;font-size:9px;color:#111;transform:scaleX(0.8797);-webkit-text-stroke:0.2px #111;">PARAMETER DETAILS</span>
<span class="t" style="left:253.00px;top:302.30px;font-size:9.6px;color:#111;transform:scaleX(0.7743);">4 STEP</span>
<span class="t" style="left:327.50px;top:301.50px;font-size:10.4px;color:#22298a;transform:scaleX(0.8032);-webkit-text-stroke:0.15px #22298a;">ROD DIA.</span>
<span class="t" style="left:369.60px;top:302.30px;font-size:9.6px;color:#111;transform:scaleX(0.8952);">&Phi;1.0</span>
<span class="t" style="left:255.00px;top:321.24px;font-size:9.3px;color:#22298a;transform:scaleX(0.9877);-webkit-text-stroke:0.15px #22298a;">Min</span>
<span class="t" style="left:255.00px;top:349.04px;font-size:9.3px;color:#22298a;transform:scaleX(0.9444);-webkit-text-stroke:0.15px #22298a;">Max</span>
<span class="t" style="left:198.60px;top:334.68px;font-size:7.8px;color:#22298a;transform:scaleX(0.9234);-webkit-text-stroke:0.25px #22298a;">FEED(m/min)</span>
<span class="t" style="left:251.30px;top:334.25px;font-size:9.5px;color:#0a0a0a;font-weight:bold;">5.0</span>
<span class="t" style="left:251.30px;top:362.85px;font-size:9.5px;color:#0a0a0a;font-weight:bold;">15.0</span>
<span class="t" style="left:204.00px;top:349.85px;font-size:9.5px;color:#0a0a0a;font-weight:bold;">10.0</span>
<span class="t" style="left:387.00px;top:321.24px;font-size:9.3px;color:#22298a;transform:scaleX(0.9877);-webkit-text-stroke:0.15px #22298a;">Min</span>
<span class="t" style="left:387.00px;top:349.04px;font-size:9.3px;color:#22298a;transform:scaleX(0.9444);-webkit-text-stroke:0.15px #22298a;">Max</span>
<span class="t" style="left:383.30px;top:334.25px;font-size:9.5px;color:#0a0a0a;font-weight:bold;">5.0</span>
<span class="t" style="left:383.30px;top:362.85px;font-size:9.5px;color:#0a0a0a;font-weight:bold;">15.0</span>
<span class="t" style="left:336.00px;top:349.85px;font-size:9.5px;color:#0a0a0a;font-weight:bold;">12.0</span>
<span class="t" style="left:255.00px;top:393.74px;font-size:9.3px;color:#22298a;transform:scaleX(0.9877);-webkit-text-stroke:0.15px #22298a;">Min</span>
<span class="t" style="left:255.00px;top:421.54px;font-size:9.3px;color:#22298a;transform:scaleX(0.9444);-webkit-text-stroke:0.15px #22298a;">Max</span>
<span class="t" style="left:192.00px;top:408.88px;font-size:7.8px;color:#22298a;transform:scaleX(0.9077);-webkit-text-stroke:0.25px #22298a;">WELD VOLT.(V)</span>
<span class="t" style="left:251.30px;top:406.75px;font-size:9.5px;color:#0a0a0a;font-weight:bold;">18.0</span>
<span class="t" style="left:251.30px;top:435.35px;font-size:9.5px;color:#0a0a0a;font-weight:bold;">22.0</span>
<span class="t" style="left:204.00px;top:422.35px;font-size:9.5px;color:#0a0a0a;font-weight:bold;">19.0</span>
<span class="t" style="left:387.00px;top:393.74px;font-size:9.3px;color:#22298a;transform:scaleX(0.9877);-webkit-text-stroke:0.15px #22298a;">Min</span>
<span class="t" style="left:387.00px;top:421.54px;font-size:9.3px;color:#22298a;transform:scaleX(0.9444);-webkit-text-stroke:0.15px #22298a;">Max</span>
<span class="t" style="left:320.40px;top:407.18px;font-size:7.8px;color:#22298a;transform:scaleX(0.9121);-webkit-text-stroke:0.25px #22298a;">CRATER VOLT.(V)</span>
<span class="t" style="left:383.30px;top:406.75px;font-size:9.5px;color:#0a0a0a;font-weight:bold;">14.0</span>
<span class="t" style="left:383.30px;top:435.35px;font-size:9.5px;color:#0a0a0a;font-weight:bold;">18.0</span>
<span class="t" style="left:336.00px;top:422.35px;font-size:9.5px;color:#0a0a0a;font-weight:bold;">16.0</span>
<span class="t" style="left:304.40px;top:471.48px;font-size:7.6px;color:#fff;transform:scaleX(0.9680);-webkit-text-stroke:0.25px #fff;">ADDING</span>
<span class="t" style="left:378.00px;top:470.68px;font-size:7.6px;color:#fff;transform:scaleX(0.9506);-webkit-text-stroke:0.25px #fff;">TO MACHINE</span>
<span class="t" style="left:594.20px;top:322.88px;font-size:8.4px;color:#22298a;transform:scaleX(0.9124);-webkit-text-stroke:0.25px #22298a;">HOT S.CUR</span>
<span class="t" style="left:655.00px;top:322.89px;font-size:8.6px;color:#4a4a4a;-webkit-text-stroke:0.2px #4a4a4a;">1</span>
<span class="t" style="left:594.20px;top:341.13px;font-size:8.4px;color:#22298a;transform:scaleX(0.9540);-webkit-text-stroke:0.25px #22298a;">HOT S.VOLT.</span>
<span class="t" style="left:655.00px;top:341.14px;font-size:8.6px;color:#4a4a4a;-webkit-text-stroke:0.2px #4a4a4a;">1</span>
<span class="t" style="left:594.20px;top:359.38px;font-size:8.4px;color:#22298a;transform:scaleX(0.9481);-webkit-text-stroke:0.25px #22298a;">HOT S.TIME</span>
<span class="t" style="left:655.00px;top:359.39px;font-size:8.6px;color:#4a4a4a;-webkit-text-stroke:0.2px #4a4a4a;">1</span>
<span class="t" style="left:594.20px;top:377.63px;font-size:8.4px;color:#22298a;transform:scaleX(0.9354);-webkit-text-stroke:0.25px #22298a;">B.B.VOLT.</span>
<span class="t" style="left:655.00px;top:377.64px;font-size:8.6px;color:#4a4a4a;-webkit-text-stroke:0.2px #4a4a4a;">2</span>
<span class="t" style="left:594.20px;top:395.88px;font-size:8.4px;color:#22298a;transform:scaleX(0.9154);-webkit-text-stroke:0.25px #22298a;">B.B. TIME</span>
<span class="t" style="left:655.00px;top:395.89px;font-size:8.6px;color:#4a4a4a;-webkit-text-stroke:0.2px #4a4a4a;">2</span>
<span class="t" style="left:594.20px;top:414.62px;font-size:7.4px;color:#22298a;transform:scaleX(0.9420);-webkit-text-stroke:0.25px #22298a;">PENETRATION</span>
<span class="t" style="left:655.00px;top:414.14px;font-size:8.6px;color:#4a4a4a;-webkit-text-stroke:0.2px #4a4a4a;">3</span>
<span class="t" style="left:594.20px;top:432.38px;font-size:8.4px;color:#22298a;transform:scaleX(0.8982);-webkit-text-stroke:0.25px #22298a;">SLOW FEED.</span>
<span class="t" style="left:655.00px;top:432.39px;font-size:8.6px;color:#4a4a4a;-webkit-text-stroke:0.2px #4a4a4a;">4</span>
<span class="t" style="left:687.40px;top:322.88px;font-size:8.4px;color:#22298a;transform:scaleX(0.8636);-webkit-text-stroke:0.25px #22298a;">ARC FORCE</span>
<span class="t" style="left:745.00px;top:322.89px;font-size:8.6px;color:#4a4a4a;-webkit-text-stroke:0.2px #4a4a4a;">5</span>
<span class="t" style="left:684.80px;top:341.13px;font-size:8.4px;color:#22298a;transform:scaleX(0.8716);-webkit-text-stroke:0.25px #22298a;">PRE-GAS(S)</span>
<span class="t" style="left:744.40px;top:341.04px;font-size:8.8px;color:#0a0a0a;font-weight:bold;">1.0</span>
<span class="t" style="left:684.80px;top:359.38px;font-size:8.4px;color:#22298a;transform:scaleX(0.8806);-webkit-text-stroke:0.25px #22298a;">POST GAS(S)</span>
<span class="t" style="left:744.40px;top:359.29px;font-size:8.8px;color:#0a0a0a;font-weight:bold;">1.2</span>
<span class="t" style="left:684.80px;top:378.12px;font-size:7.4px;color:#22298a;transform:scaleX(0.9044);-webkit-text-stroke:0.25px #22298a;">CRATER TIME(S)</span>
<span class="t" style="left:744.40px;top:377.54px;font-size:8.8px;color:#0a0a0a;font-weight:bold;">1.5</span>
<span class="t" style="left:684.80px;top:395.88px;font-size:8.4px;color:#22298a;transform:scaleX(0.9489);-webkit-text-stroke:0.25px #22298a;">SFS.(m/min)</span>
</body></html>
